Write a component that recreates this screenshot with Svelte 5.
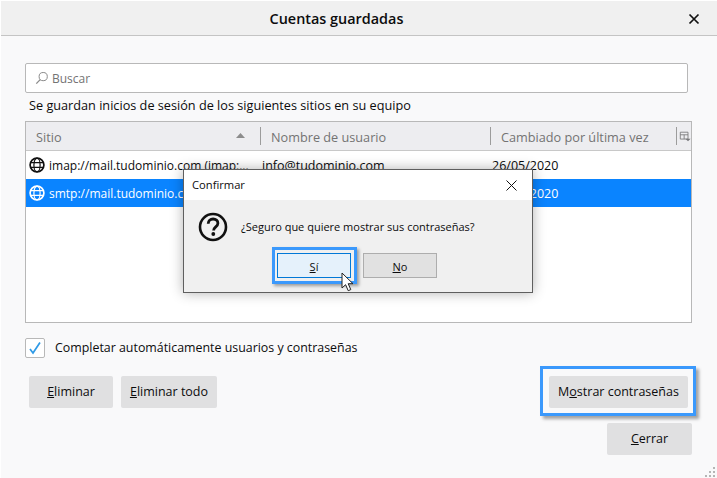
<script>
  const columns = [
    { label: 'Sitio', cls: 'c1' },
    { label: 'Nombre de usuario', cls: 'c2' },
    { label: 'Cambiado por última vez', cls: 'c3' }
  ];
  const rows = [
    { site: 'imap://mail.tudominio.com (imap:...', user: 'info@tudominio.com', date: '26/05/2020', sel: false },
    { site: 'smtp://mail.tudominio.com (smtp:...', user: 'info@tudominio.com', date: '26/05/2020', sel: true }
  ];
</script>

<div class="window">
  <header class="titlebar">
    <span class="title">Cuentas guardadas</span>
    <svg class="close" width="12" height="12" viewBox="0 0 12 12"><path d="M1.5 1.5l9 9M10.5 1.5l-9 9" stroke="#111" stroke-width="1.7" fill="none"/></svg>
  </header>

  <main class="content">
    <div class="search">
      <svg width="14" height="14" viewBox="0 0 14 14"><circle cx="8.2" cy="5.6" r="4.1" fill="none" stroke="#8a8a8a" stroke-width="1"/><path d="M5.2 8.6L1.3 12.6" stroke="#8a8a8a" stroke-width="1.3"/></svg>
      <span>Buscar</span>
    </div>
    <p class="intro">Se guardan inicios de sesión de los siguientes sitios en su equipo</p>

    <section class="tree">
      <div class="thead">
        {#each columns as c, i}
          <div class="th {c.cls}">
            <span>{c.label}</span>
            {#if i === 0}
              <svg class="sort" width="9" height="5" viewBox="0 0 9 5"><path d="M4.5 0L9 5H0z" fill="#8c8c8c"/></svg>
            {/if}
          </div>
        {/each}
        <div class="th picker">
          <svg width="14" height="13" viewBox="0 0 14 13"><path d="M1.5 1.5h9v8h-9zM1.5 4.5h9M6 4.5v5" fill="none" stroke="#77777a"/><path d="M7.5 9h6l-3 3z" fill="#77777a"/></svg>
        </div>
      </div>
      {#each rows as r}
        <div class="row" class:sel={r.sel}>
          <div class="td c1">
            <svg class="globe" width="16" height="16" viewBox="0 0 16 16" fill="none" stroke={r.sel ? '#fff' : '#111'}>
              <circle cx="8" cy="8" r="6.9" stroke-width="1.7"/>
              <ellipse cx="8" cy="8" rx="3.1" ry="6.9" stroke-width="1.2"/>
              <path d="M1.5 5.6h13M1.5 10.4h13" stroke-width="1.2"/>
            </svg>
            <span class="cell site">{r.site}</span>
          </div>
          <div class="td c2"><span class="cell">{r.user}</span></div>
          <div class="td c3"><span class="cell">{r.date}</span></div>
        </div>
      {/each}
    </section>

    <label class="check">
      <span class="box">
        <svg width="14" height="14" viewBox="0 0 14 14"><path d="M2 8l3 4L12 1.5" fill="none" stroke="#2f9ae6" stroke-width="1.7"/></svg>
      </span>
      <span class="check-text">Completar automáticamente usuarios y contraseñas</span>
    </label>

    <div class="actions">
      <div class="left">
        <button class="btn b1"><u>E</u>liminar</button>
        <button class="btn b2"><u>E</u>liminar todo</button>
      </div>
      <div class="right">
        <button class="btn b3 ring">M<u>o</u>strar contraseñas</button>
        <button class="btn b4"><u>C</u>errar</button>
      </div>
    </div>
  </main>

  <svg class="grip" width="11" height="11" viewBox="0 0 11 11" fill="#b5b5b5">
    <rect x="8" y="0" width="2" height="2"/><rect x="4" y="4" width="2" height="2"/><rect x="8" y="4" width="2" height="2"/>
    <rect x="0" y="8" width="2" height="2"/><rect x="4" y="8" width="2" height="2"/><rect x="8" y="8" width="2" height="2"/>
  </svg>

  <div class="dialog">
    <div class="dlg-title">
      <span>Confirmar</span>
      <svg width="11" height="11" viewBox="0 0 11 11"><path d="M.5.5l10 10M10.5.5l-10 10" stroke="#111" stroke-width="1" fill="none"/></svg>
    </div>
    <div class="dlg-body">
      <div class="dlg-msg">
        <svg width="30" height="30" viewBox="0 0 30 30">
          <circle cx="15" cy="15" r="13" fill="none" stroke="#111" stroke-width="2.6"/>
          <path d="M10.2 11.8c0-3 2.2-4.8 4.9-4.8s4.8 1.7 4.8 4.2c0 3.6-4.3 3.7-4.3 7.3" fill="none" stroke="#111" stroke-width="2.8"/>
          <circle cx="15.3" cy="22" r="1.9" fill="#111"/>
        </svg>
        <span class="dlg-text">¿Seguro que quiere mostrar sus contraseñas?</span>
      </div>
      <div class="dlg-btns">
        <button class="dbtn yes"><u>S</u>í</button>
        <button class="dbtn"><u>N</u>o</button>
      </div>
    </div>
    <svg class="cursor" width="13" height="20" viewBox="0 0 13 20"><path d="M1 1v15l3.6-3.3 2.6 6 2.6-1.1-2.6-5.9H12z" fill="#fff" stroke="#222" stroke-width="1" stroke-linejoin="round"/></svg>
  </div>
</div>

<style>
  :global(body) { margin: 0; }
  .window {
    position: relative;
    width: 717px;
    height: 478px;
    overflow: hidden;
    background: #f9f9fa;
    color: #0c0c0d;
    font-family: "Open Sans", "Noto Sans", sans-serif;
    font-size: 12.5px;
    border-top: 1px solid #fff;
    border-left: 1px solid #fff;
    box-sizing: border-box;
  }
  .titlebar {
    height: 35px;
    box-sizing: border-box;
    background: #f0f0f0;
    border-bottom: 1px solid #c4c4c4;
    display: flex;
    align-items: center;
    justify-content: center;
    padding-right: 45px;
    position: relative;
  }
  .title { font-weight: 600; font-size: 14.4px; }
  .close { position: absolute; right: 17px; top: 12px; }
  .content { padding: 27px 25px 0 24px; }
  .search {
    height: 30px;
    width: 663px;
    box-sizing: border-box;
    background: #fff;
    border: 1px solid #b8b8b8;
    border-radius: 2px;
    display: flex;
    align-items: center;
    gap: 3px;
    padding-left: 9px;
    color: #737373;
    font-size: 12px;
  }
  .intro { margin: 2px 0 6px 4px; line-height: 20px; font-size: 12.7px; }
  .tree {
    width: 667px;
    height: 202px;
    box-sizing: border-box;
    background: #fff;
    border: 1px solid #b8b8b8;
  }
  .thead {
    display: flex;
    height: 28px;
    background: #ededf0;
    border-bottom: 1px solid #c8c8c8;
    color: #737373;
    font-size: 12.7px;
  }
  .th {
    position: relative;
    display: flex;
    align-items: center;
    box-sizing: border-box;
    padding-left: 11px;
  }
  .th span { padding-top: 1px; }
  .th:first-child { padding-left: 10px; }
  .th + .th::before {
    content: "";
    position: absolute;
    left: 0;
    top: 5px;
    height: 18px;
    width: 1px;
    background: #9c9c9c;
  }
  .c1 { width: 234px; }
  .c2 { width: 230px; }
  .c3 { width: 186px; }
  .th.picker { width: 15px; padding: 0 0 0 3px; }
  .sort { position: absolute; left: 210px; top: 11px; }
  .row { display: flex; height: 28px; align-items: center; }
  .row.sel { background: #0a84ff; color: #fff; }
  .td { white-space: nowrap; overflow: hidden; }
  .td.c1 { display: flex; align-items: center; gap: 4px; padding-left: 3px; box-sizing: border-box; }
  .td.c2, .td.c3 { padding-left: 2px; box-sizing: border-box; }
  .cell { display: block; padding-top: 1px; }
  .site { font-size: 12px; }
  .globe { flex: none; }
  .check { display: flex; align-items: center; gap: 10px; margin-top: 14px; line-height: 20px; }
  .check-text { font-size: 12.4px; padding-top: 1px; }
  .box {
    width: 20px;
    height: 20px;
    box-sizing: border-box;
    background: #fff;
    border: 1px solid #b8b8b8;
    border-radius: 2px;
    display: flex;
    align-items: center;
    justify-content: center;
  }
  .actions { display: flex; justify-content: space-between; margin-top: 18px; padding-left: 4px; }
  .left { display: flex; gap: 8px; }
  .right { display: flex; flex-direction: column; align-items: flex-end; gap: 15px; }
  .btn {
    height: 32px;
    border: 0;
    border-radius: 2px;
    background: #e0e0e1;
    color: #0c0c0d;
    font: inherit;
    padding: 0 0 2px;
  }
  .b1 { width: 84px; }
  .b2 { width: 96px; }
  .b3 { width: 139px; margin-right: 4px; }
  .b4 { width: 85px; }
  .ring { position: relative; }
  .ring::after {
    content: "";
    position: absolute;
    inset: -10px -8px -8px -9px;
    border: 3px solid #3b99fc;
    box-shadow: 3px 3px 3px rgba(0, 0, 0, 0.35);
  }
  .grip { position: absolute; right: 1px; bottom: 0; }
  .dialog {
    position: absolute;
    left: 182px;
    top: 168px;
    width: 350px;
    height: 124px;
    box-sizing: border-box;
    background: #f0f0f0;
    border: 1px solid #5f5f5f;
    box-shadow: 0 0 12px rgba(0, 0, 0, 0.3);
    font-size: 11px;
  }
  .dlg-title {
    height: 30px;
    background: #fff;
    display: flex;
    align-items: center;
    justify-content: space-between;
    padding: 0 15px 0 8px;
  }
  .dlg-title span { margin-top: -1px; font-size: 11.2px; }
  .dlg-body { padding: 12px 0 0 14px; }
  .dlg-msg { display: flex; align-items: center; gap: 13px; }
  .dlg-text { margin-top: -2px; }
  .dlg-btns { display: flex; gap: 12px; margin-top: 11px; padding-left: 79px; }
  .dbtn {
    width: 74px;
    height: 25px;
    box-sizing: border-box;
    background: #e1e1e1;
    border: 1px solid #adadad;
    color: #0c0c0d;
    font: inherit;
    padding: 1px 0 0;
  }
  .dbtn.yes {
    position: relative;
    background: #e5f1fb;
    border-color: #0078d7;
  }
  .dbtn.yes::after {
    content: "";
    position: absolute;
    inset: -7px -7px -7px -6px;
    border: 3px solid #3b99fc;
    box-shadow: 2px 2px 3px rgba(0, 0, 0, 0.35);
  }
  .cursor { position: absolute; left: 157px; top: 102px; }
</style>
